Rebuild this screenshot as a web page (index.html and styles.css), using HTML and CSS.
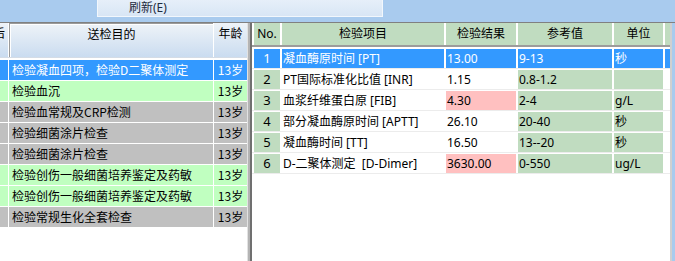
FILE: index.html
```html
<!DOCTYPE html>
<html lang="zh-CN">
<head>
  <meta charset="UTF-8" />
  <meta name="viewport" content="width=device-width, initial-scale=1.0"/>
  <title>检验结果</title>
  <link rel="stylesheet" href="styles.css">
</head>
<body>
  <div class="topbar">
    <div class="tool-btn">刷新(E)</div>
  </div>
  <div class="main">
    <div class="left">
      <div class="lhead">
        <div class="lc c0"><span class="cut">后</span></div>
        <div class="lc c1">送检目的</div>
        <div class="lc c2">年龄</div>
      </div>
      <div class="lrow sel"><div class="c0"></div><div class="c1">检验凝血四项，检验D二聚体测定</div><div class="c2">13岁</div></div>
      <div class="lrow green"><div class="c0"></div><div class="c1">检验血沉</div><div class="c2">13岁</div></div>
      <div class="lrow gray"><div class="c0"></div><div class="c1">检验血常规及CRP检测</div><div class="c2">13岁</div></div>
      <div class="lrow gray"><div class="c0"></div><div class="c1">检验细菌涂片检查</div><div class="c2">13岁</div></div>
      <div class="lrow gray"><div class="c0"></div><div class="c1">检验细菌涂片检查</div><div class="c2">13岁</div></div>
      <div class="lrow green"><div class="c0"></div><div class="c1">检验创伤一般细菌培养鉴定及药敏</div><div class="c2">13岁</div></div>
      <div class="lrow green"><div class="c0"></div><div class="c1">检验创伤一般细菌培养鉴定及药敏</div><div class="c2">13岁</div></div>
      <div class="lrow gray"><div class="c0"></div><div class="c1">检验常规生化全套检查</div><div class="c2">13岁</div></div>
    </div>
    <div class="splitter"></div>
    <div class="right">
      <div class="rhead">
        <div>No.</div><div>检验项目</div><div>检验结果</div><div>参考值</div><div>单位</div><div></div>
      </div>
      <div class="rrow sel">
        <div class="no">1</div><div class="item">凝血酶原时间 [PT]</div><div class="res">13.00</div><div class="ref">9-13</div><div class="unit">秒</div><div class="ext"></div>
      </div>
      <div class="rrow">
        <div class="no">2</div><div class="item">PT国际标准化比值 [INR]</div><div class="res">1.15</div><div class="ref">0.8-1.2</div><div class="unit"></div><div class="ext"></div>
      </div>
      <div class="rrow">
        <div class="no">3</div><div class="item">血浆纤维蛋白原 [FIB]</div><div class="res high">4.30</div><div class="ref">2-4</div><div class="unit">g/L</div><div class="ext"></div>
      </div>
      <div class="rrow">
        <div class="no">4</div><div class="item">部分凝血酶原时间 [APTT]</div><div class="res">26.10</div><div class="ref">20-40</div><div class="unit">秒</div><div class="ext"></div>
      </div>
      <div class="rrow">
        <div class="no">5</div><div class="item">凝血酶时间 [TT]</div><div class="res">16.50</div><div class="ref">13--20</div><div class="unit">秒</div><div class="ext"></div>
      </div>
      <div class="rrow">
        <div class="no">6</div><div class="item">D-二聚体测定  [D-Dimer]</div><div class="res high">3630.00</div><div class="ref">0-550</div><div class="unit">ug/L</div><div class="ext"></div>
      </div>
    </div>
    <div class="edge"></div>
  </div>
</body>
</html>
```

FILE: styles.css
```css
body {
  margin: 0;
  width: 675px;
  height: 261px;
  overflow: hidden;
  background: #fff;
  font-family: "Noto Sans", "Noto Sans CJK SC", sans-serif;
  font-size: 12px;
  color: #000;
}
.topbar {
  height: 22px;
  background: #a9cbee;
}
.tool-btn {
  margin-left: 97px;
  width: 286px;
  height: 17px;
  box-sizing: border-box;
  border: 1px solid #f2f7fc;
  border-top: none;
  background: linear-gradient(#e6eff9, #d8e6f5);
  padding-left: 31px;
  line-height: 16px;
  color: #1e2b3d;
}
.main {
  display: flex;
  height: 238px;
  border-top: 1px solid #808080;
}

/* left list */
.left {
  width: 247px;
  font-family: "Noto Sans CJK SC", sans-serif;
}
.lhead, .lrow {
  display: grid;
  grid-template-columns: 8px 204px 33px;
  column-gap: 1px;
}
.lhead {
  height: 34px;
  border-bottom: 1px solid #d4dce6;
  margin-bottom: 2px;
}
.lhead .lc {
  background: linear-gradient(#eef3f8, #cadcf0);
  text-align: center;
  line-height: 14px;
  padding-top: 3px;
  overflow: hidden;
}
.lhead .c1 {
  border-left: 1px solid #9a9a9a;
  border-top: 1px solid #9a9a9a;
  box-shadow: inset 1px 1px 0 #fff;
}
.lhead .c0 {
  text-align: left;
}
.cut {
  margin-left: -7px;
}
.lrow {
  height: 20px;
  margin-bottom: 1px;
  line-height: 20px;
}
.lrow .c1 {
  padding-left: 3px;
  white-space: nowrap;
}
.lrow .c2 {
  text-align: center;
}
.lrow.sel div { background: #3399ff; color: #fff; }
.lrow.green div { background: #c0ffc0; }
.lrow.gray div { background: #c0c0c0; }

.splitter {
  width: 5px;
  background: linear-gradient(to right, #e2e2e2 0 1px, #b4b4b4 1px 3px, #707070 3px 5px);
}

/* right grid */
.right {
  width: 418px;
}
.rhead, .rrow {
  display: grid;
  grid-template-columns: 26px 162px 70px 94px 49px 5px;
  column-gap: 2px;
  padding-left: 2px;
}
.rhead {
  height: 22px;
  border-bottom: 2px solid #9c9c9c;
  margin-bottom: 2px;
}
.rhead div {
  background: #c0dcc0;
  text-align: center;
  line-height: 22px;
}
.rrow {
  height: 19px;
  border-bottom: 1px solid #ececec;
  margin-bottom: 1px;
  line-height: 19px;
}
.rrow div {
  padding-left: 1px;
  white-space: pre;
  overflow: hidden;
}
.rrow .no {
  background: #c0dcc0;
  text-align: center;
  padding-left: 0;
  font-size: 13px;
}
.rrow .ref, .rrow .unit { background: #c0dcc0; }
.rrow .res.high { background: #ffc0c0; }
.rrow.sel div { background: #3399ff; color: #fff; }

.edge {
  width: 5px;
  background: linear-gradient(to right, #d0d0d0 0 2px, #a9cbee 2px);
}
```
